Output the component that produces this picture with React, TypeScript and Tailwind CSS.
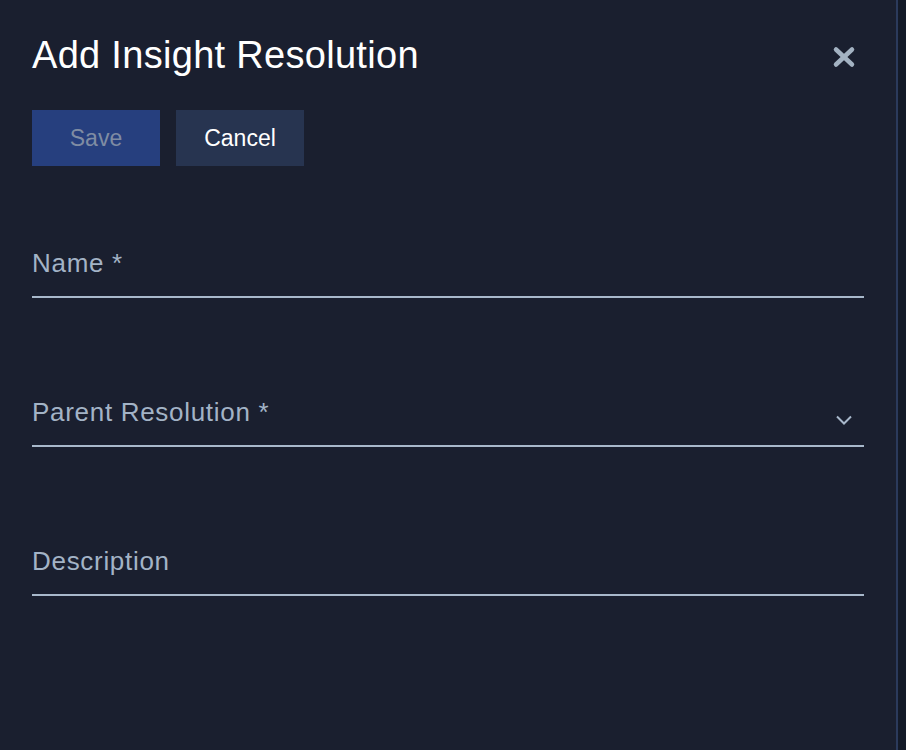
export default function App() {
  const fields = [
    { label: "Name *", select: false },
    { label: "Parent Resolution *", select: true },
    { label: "Description", select: false },
  ];

  return (
    <div className="flex h-[750px] w-full bg-[#1a1f2f] font-['Liberation_Sans',Arial,sans-serif]">
      {/* panel */}
      <div className="flex-1 border-r-2 border-[#2b3a5c] px-8">
        <div className="mt-9 flex h-[38px] items-start justify-between">
          <h1 className="text-[38px] leading-[38px] font-light tracking-[0.3px] text-white">Add Insight Resolution</h1>
          <button className="mt-[1px] p-2 text-[#a3b2c2]" aria-label="Close">
            <svg width="24" height="24" viewBox="0 0 24 24" fill="none" stroke="currentColor" strokeWidth="4.5" strokeLinecap="round">
              <path d="M4 4.5L20 19.5" />
              <path d="M20 4.5L4 19.5" />
            </svg>
          </button>
        </div>

        <div className="mt-[36px] flex gap-4">
          <button className="h-14 w-32 bg-[#263f7e] text-[23px] text-[#7f8ca3]">Save</button>
          <button className="h-14 w-32 bg-[#273450] text-[23px] text-white">Cancel</button>
        </div>

        <div className="mt-[81px] flex flex-col gap-[98px]">
          {fields.map((f) => (
            <div key={f.label} className="flex items-center justify-between border-b-2 border-[#a8b8cb] pb-[17px]">
              <span className="text-[26px] leading-8 tracking-[0.7px] text-[#a3b3c6]">{f.label}</span>
              {f.select && (
                <svg className="mr-3 mt-4" width="16" height="10" viewBox="0 0 16 10" fill="none" stroke="#a8b8cb" strokeWidth="2">
                  <path d="M1 1.5L8 8.5L15 1.5" />
                </svg>
              )}
            </div>
          ))}
        </div>
      </div>
      <div className="w-2 bg-[#141a28]" />
    </div>
  );
}
